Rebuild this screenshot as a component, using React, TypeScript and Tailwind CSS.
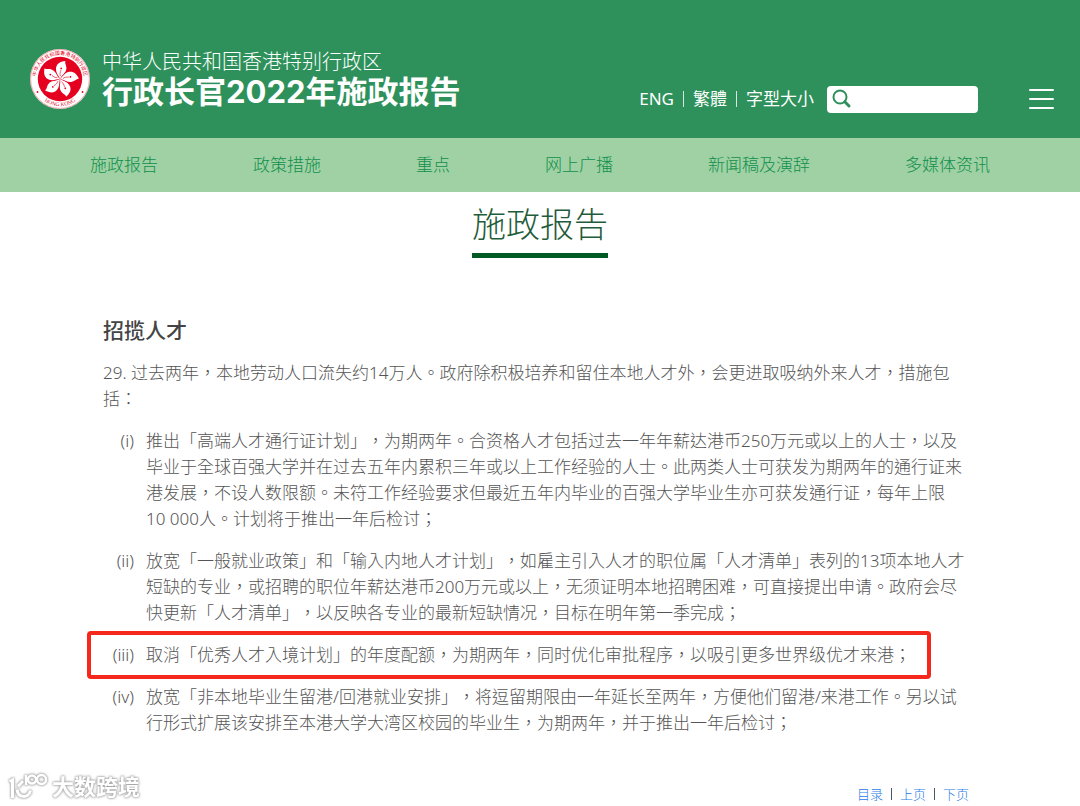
import type { ReactNode } from "react";

const navItems = ["施政报告", "政策措施", "重点", "网上广播", "新闻稿及演辞", "多媒体资讯"];

const pager = ["目录", "上页", "下页"];

const measures = [
  {
    no: "(i)",
    text: "推出「高端人才通行证计划」，为期两年。合资格人才包括过去一年年薪达港币250万元或以上的人士，以及毕业于全球百强大学并在过去五年内累积三年或以上工作经验的人士。此两类人士可获发为期两年的通行证来港发展，不设人数限额。未符工作经验要求但最近五年内毕业的百强大学毕业生亦可获发通行证，每年上限10\u00a0000人。计划将于推出一年后检讨；",
  },
  {
    no: "(ii)",
    text: "放宽「一般就业政策」和「输入内地人才计划」，如雇主引入人才的职位属「人才清单」表列的13项本地人才短缺的专业，或招聘的职位年薪达港币200万元或以上，无须证明本地招聘困难，可直接提出申请。政府会尽快更新「人才清单」，以反映各专业的最新短缺情况，目标在明年第一季完成；",
  },
  {
    no: "(iii)",
    text: "取消「优秀人才入境计划」的年度配额，为期两年，同时优化审批程序，以吸引更多世界级优才来港；",
    highlighted: true,
  },
  {
    no: "(iv)",
    text: "放宽「非本地毕业生留港/回港就业安排」，将逗留期限由一年延长至两年，方便他们留港/来港工作。另以试行形式扩展该安排至本港大学大湾区校园的毕业生，为期两年，并于推出一年后检讨；",
  },
];

const petals = [0, 72, 144, 216, 288];

const Emblem = () => (
  <svg viewBox="0 0 60 60" className="size-[60px] shrink-0" aria-hidden="true">
    <defs>
      <path id="ring-top" d="M9.8 43.5 A24.2 24.2 0 1 1 50.200 43.500" />
      <path id="ring-bottom" d="M11 49.5 A27.3 27.3 0 0 0 49 49.5" />
    </defs>
    <circle cx="30" cy="30" r="30" fill="#fff" />
    <circle cx="30" cy="30" r="29.4" fill="none" stroke="#e8283c" strokeWidth="0.4" />
    <circle cx="30" cy="30" r="22.2" fill="#e60020" />
    {petals.map((deg) => (
      <g key={deg} transform={`rotate(${deg} 30 30)`}>
        <path
          d="M30 30 C28.800 26.500 26 24.500 26 20 C26 15.500 29.500 12.500 35.500 12 C34.400 14.200 36.600 16 36.400 19.500 C36.200 24 32 25.500 30 30 Z"
          fill="#fff"
        />
        <path d="M30.400 27 C29.800 25 30 23 31 21" fill="none" stroke="#e60020" strokeWidth="0.6" />
        <circle cx="31.2" cy="19.4" r="0.9" fill="#e60020" />
      </g>
    ))}
    <text fontSize="5" fontWeight="400" fill="#e60020" fontFamily="'Noto Sans CJK TC', sans-serif">
      <textPath href="#ring-top" startOffset="50%" textAnchor="middle">
        中华人民共和国香港特别行政区
      </textPath>
    </text>
    <text fontSize="5.5" fontWeight="400" fill="#e60020" fontFamily="'Liberation Serif', serif">
      <textPath href="#ring-bottom" startOffset="50%" textAnchor="middle">
        HONG KONG
      </textPath>
    </text>
    <circle cx="7.5" cy="43" r="0.9" fill="#e60020" />
    <circle cx="52.5" cy="43" r="0.9" fill="#e60020" />
  </svg>
);

const Divider = ({ className }: { className: string }) => <span className={`w-px ${className}`} />;

const SearchBox = () => (
  <label className="ml-[13px] flex h-[27px] w-[151px] items-center rounded bg-white pl-[5px]">
    <svg viewBox="0 0 20 20" className="size-5 shrink-0" fill="none" stroke="#2e915b" aria-hidden="true">
      <circle cx="8" cy="8" r="6.5" strokeWidth="2" />
      <path d="M12.8 12.8 L17 17" strokeWidth="3" strokeLinecap="round" />
    </svg>
    <input type="search" aria-label="搜寻" className="w-full min-w-0 bg-transparent px-1 text-sm text-gray-700 outline-none" />
  </label>
);

const Header = () => (
  <header className="bg-[#2e915b] text-white">
    <div className="flex h-[138px] items-center justify-between pt-5 pr-[26px] pl-[30px]">
      <div className="flex items-center gap-3">
        <Emblem />
        <div className="flex flex-col pt-0.5">
          <p className="text-[20px] leading-6 font-light">中华人民共和国香港特别行政区</p>
          <p className="font-[Inter,'Noto_Sans_CJK_TC',sans-serif] text-[31px] leading-9 font-bold">
            行政长官2022年施政报告
          </p>
        </div>
      </div>
      <div className="flex items-center pt-10">
        <div className="flex items-center gap-[9px] text-[17px] leading-6 font-normal">
          <a href="#eng">ENG</a>
          <Divider className="h-4 bg-white/80" />
          <a href="#trad">繁體</a>
          <Divider className="h-4 bg-white/80" />
          <a href="#size">字型大小</a>
        </div>
        <SearchBox />
        <button type="button" aria-label="选单" className="ml-[51px] flex w-[25px] flex-col gap-[7px]">
          <span className="h-0.5 w-full rounded-full bg-white" />
          <span className="h-0.5 w-full rounded-full bg-white" />
          <span className="h-0.5 w-full rounded-full bg-white" />
        </button>
      </div>
    </div>
  </header>
);

const Nav = () => (
  <nav className="flex h-[54px] items-center justify-between bg-[#9fd1a5] px-[90px] text-[17px] text-[#0f8f4a]">
    {navItems.map((item) => (
      <a key={item} href="#nav">
        {item}
      </a>
    ))}
  </nav>
);

const Measure = ({ no, highlighted, children }: { no: string; highlighted?: boolean; children: ReactNode }) => (
  <li className="relative grid grid-cols-[31px_1fr] gap-3">
    <span className="text-right">{no}</span>
    <p>{children}</p>
    {highlighted && (
      <span className="pointer-events-none absolute -inset-y-[11px] right-10 -left-4 rounded border-4 border-[#f5281b]" />
    )}
  </li>
);

const Watermark = () => (
  <div className="flex items-center gap-1 text-white [filter:drop-shadow(0_0_1px_#999)_drop-shadow(0_0_1px_#bbb)]">
    <svg viewBox="0 0 40 28" className="h-7 w-10" fill="none" stroke="currentColor" strokeWidth="3" aria-hidden="true">
      <path d="M1.500 9.500 L4.500 8 V26" />
      <path d="M15 9 L10 14.500" />
      <path d="M9 17.500 C10 26.500 20.500 26.500 22.500 18.500" />
      <path d="M18 3 V13" strokeWidth="2.500" />
      <circle cx="24" cy="7.500" r="4" strokeWidth="2.500" />
      <circle cx="33.500" cy="7.500" r="4.500" strokeWidth="2.500" />
    </svg>
    <span className="text-[22px] leading-7 font-bold">大数跨境</span>
  </div>
);

export default function App() {
  return (
    <div
      lang="zh-Hant"
      className="min-h-screen bg-white font-['Noto_Sans','Noto_Sans_CJK_TC',sans-serif] font-light text-[#555] [text-spacing-trim:space-all]"
    >
      <Header />
      <Nav />
      <main>
        <h1 className="mx-auto mt-2 w-fit border-b-[5px] border-[#005a24] pb-1 text-[34px] leading-[49px] text-[#1f5c3a]">
          施政报告
        </h1>
        <article className="mt-[58px] pr-[109px] pl-[103px] text-[17px] leading-[26px]">
          <h2 className="text-[21px] leading-7 font-medium text-[#444]">招揽人才</h2>
          <p className="mt-4">
            29. 过去两年，本地劳动人口流失约14万人。政府除积极培养和留住本地人才外，会更进取吸纳外来人才，措施包括：
          </p>
          <ol className="mt-4 flex flex-col gap-4">
            {measures.map((m) => (
              <Measure key={m.no} no={m.no} highlighted={m.highlighted}>
                {m.text}
              </Measure>
            ))}
          </ol>
        </article>
      </main>
      <footer className="mt-9 flex items-start justify-between pr-[111px] pl-2">
        <Watermark />
        <div className="flex items-center gap-2 pt-3 text-[13px] leading-5 text-[#1f7be6]">
          {pager.map((item, i) => (
            <span key={item} className="flex items-center gap-2">
              {i > 0 && <Divider className="h-3 bg-gray-600" />}
              <a href="#pager">{item}</a>
            </span>
          ))}
        </div>
      </footer>
    </div>
  );
}
